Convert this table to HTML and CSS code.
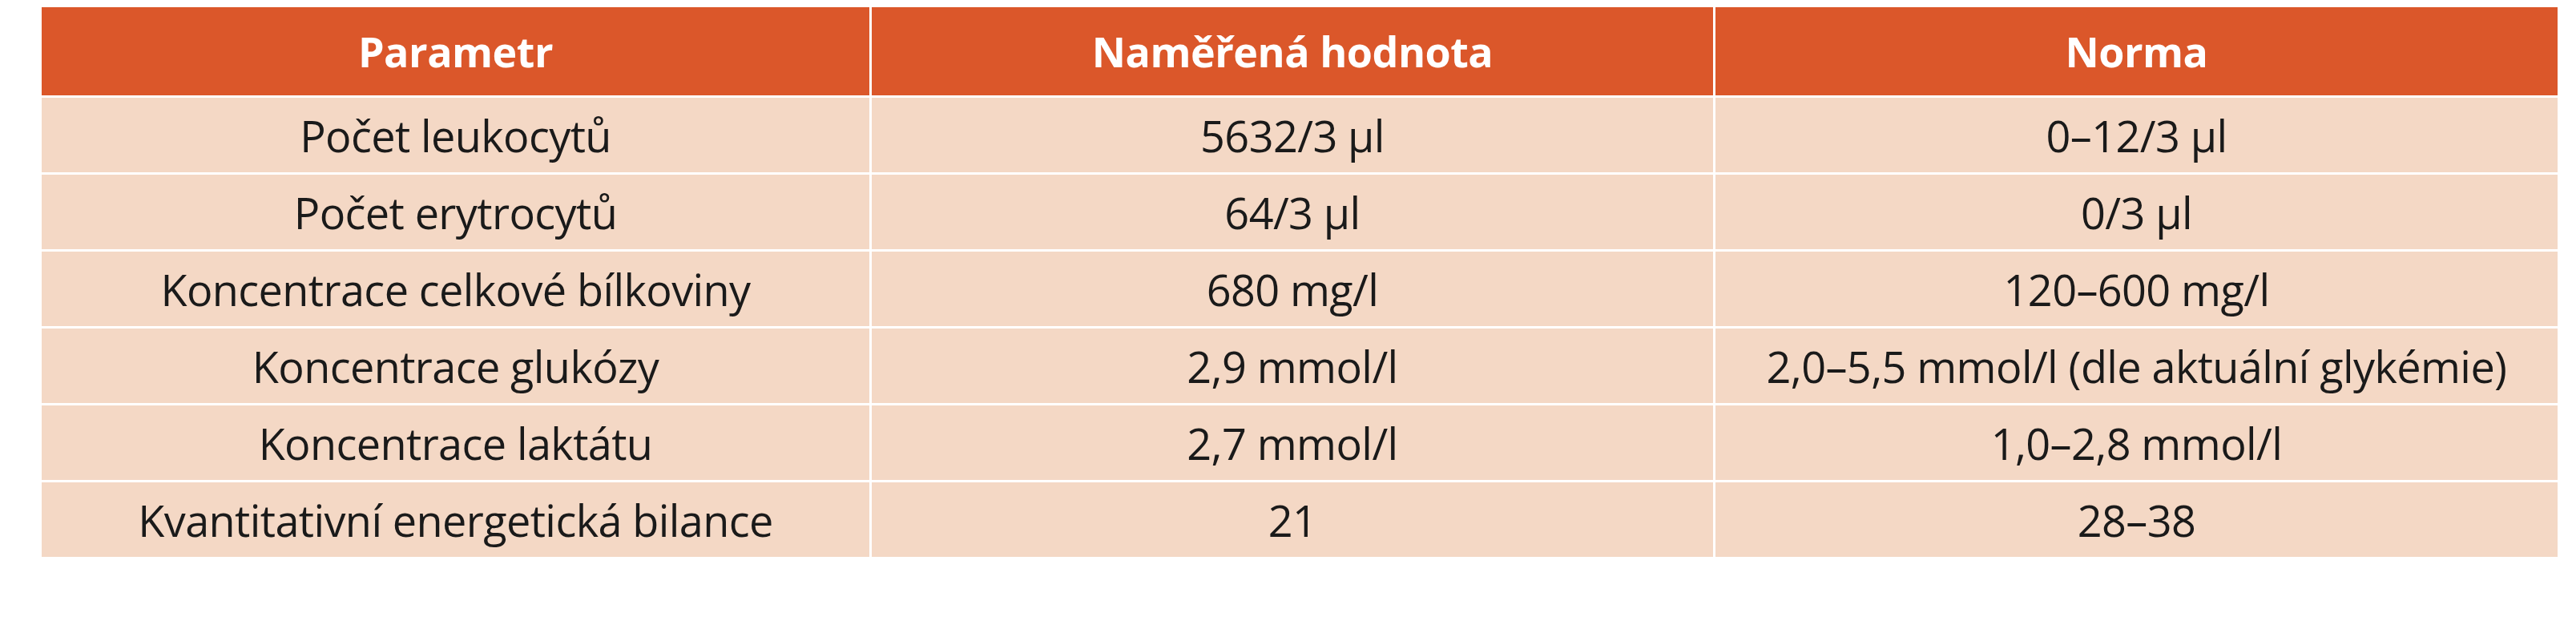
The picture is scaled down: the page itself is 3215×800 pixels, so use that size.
FILE: index.html
```html
<!DOCTYPE html>
<html lang="cs">
<head>
<meta charset="utf-8">
<title>Tabulka</title>
<link rel="stylesheet" href="styles.css">
</head>
<body>
<div class="page">
  <div class="grid">
    <div class="cell head">Parametr</div>
    <div class="cell head">Naměřená hodnota</div>
    <div class="cell head">Norma</div>

    <div class="cell">Počet leukocytů</div>
    <div class="cell">5632/3 µl</div>
    <div class="cell">0–12/3 µl</div>

    <div class="cell">Počet erytrocytů</div>
    <div class="cell">64/3 µl</div>
    <div class="cell">0/3 µl</div>

    <div class="cell">Koncentrace celkové bílkoviny</div>
    <div class="cell">680 mg/l</div>
    <div class="cell">120–600 mg/l</div>

    <div class="cell">Koncentrace glukózy</div>
    <div class="cell">2,9 mmol/l</div>
    <div class="cell">2,0–5,5 mmol/l (dle aktuální glykémie)</div>

    <div class="cell">Koncentrace laktátu</div>
    <div class="cell">2,7 mmol/l</div>
    <div class="cell">1,0–2,8 mmol/l</div>

    <div class="cell">Kvantitativní energetická bilance</div>
    <div class="cell">21</div>
    <div class="cell">28–38</div>
  </div>
</div>
</body>
</html>
```

FILE: styles.css
```css
html, body {
  margin: 0;
  padding: 0;
  background: #ffffff;
}

.page {
  padding: 9px 0 0 52px;
}

.grid {
  display: grid;
  grid-template-columns: 1033px 1050px 1051px;
  grid-template-rows: 110px repeat(6, 93px);
  column-gap: 3px;
  row-gap: 3px;
  width: 3140px;
  font-family: "Open Sans", "Noto Sans", "DejaVu Sans", sans-serif;
}

.cell {
  display: flex;
  align-items: center;
  justify-content: center;
  background: #f4d8c5;
  color: #1a1a1a;
  font-size: 54px;
  letter-spacing: -0.6px;
  white-space: nowrap;
  line-height: 1;
}

.head {
  background: #db572a;
  color: #ffffff;
  font-weight: 700;
  font-size: 52px;
  letter-spacing: -0.5px;
}
```
